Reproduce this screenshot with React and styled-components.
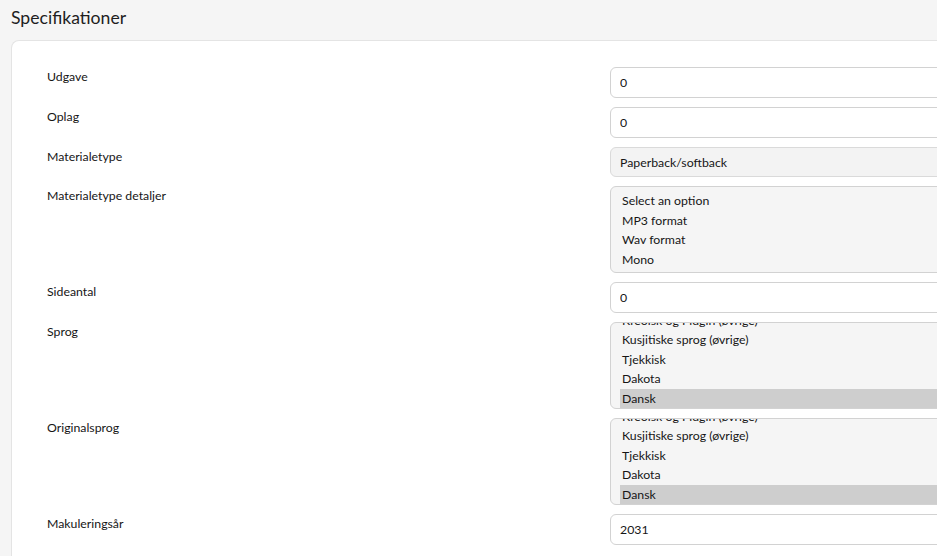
import { useEffect, useRef } from 'react';
import styled, { createGlobalStyle } from 'styled-components';

const GlobalStyle = createGlobalStyle`
    body {
        margin: 0;
        background: #f5f5f5;
        font-family: Lato, "Open Sans", sans-serif;
        color: #1c1c1c;
        overflow: hidden;
    }
`;

const sprog = [
    'Cornisk',
    'Korsikansk',
    'Kreolsk og Pidgin, engelsk-baseret',
    'Kreolsk og Pidgin, fransk-baseret',
    'Cree',
    'Kreolsk og Pidgin (øvrige)',
    'Kusjitiske sprog (øvrige)',
    'Tjekkisk',
    'Dakota',
    'Dansk',
];

const detaljer = ['Select an option', 'MP3 format', 'Wav format', 'Mono'];

function ListField({ options, selected, scrolled }) {
    const ref = useRef(null);

    useEffect(() => {
        if (scrolled && ref.current) {
            ref.current.scrollTop = ref.current.scrollHeight;
        }
    }, [scrolled]);

    return (
        <ListBox ref={ref} $scrolled={scrolled}>
            {options.map((o) => (
                <Option key={o} $selected={o === selected}>{o}</Option>
            ))}
        </ListBox>
    );
}

function App() {
    return (
        <Page>
            <GlobalStyle />
            <Title>Specifikationer</Title>
            <Card>
                <Row>
                    <Label>Udgave</Label>
                    <TextInput readOnly value="0" />
                </Row>
                <Row>
                    <Label>Oplag</Label>
                    <TextInput readOnly value="0" />
                </Row>
                <Row>
                    <Label>Materialetype</Label>
                    <TextInput disabled value="Paperback/softback" />
                </Row>
                <Row>
                    <Label>Materialetype detaljer</Label>
                    <ListField options={detaljer} />
                </Row>
                <Row>
                    <Label>Sideantal</Label>
                    <TextInput readOnly value="0" />
                </Row>
                <Row>
                    <Label>Sprog</Label>
                    <ListField options={sprog} selected="Dansk" scrolled />
                </Row>
                <Row>
                    <Label>Originalsprog</Label>
                    <ListField options={sprog} selected="Dansk" scrolled />
                </Row>
                <Row>
                    <Label>Makuleringsår</Label>
                    <TextInput readOnly value="2031" />
                </Row>
            </Card>
        </Page>
    );
}

const Page = styled.div`
    width: 1100px;
    padding-left: 11px;
`;

const Title = styled.h2`
    margin: 0;
    height: 40px;
    padding-top: 6px;
    box-sizing: border-box;
    font-size: 17.6px;
    font-weight: 400;
    line-height: 24px;
    color: #1e1e1e;
`;

const Card = styled.div`
    background: #ffffff;
    border: 1px solid #e4e4e4;
    border-right: none;
    border-radius: 8px 0 0 0;
    padding: 26px 0 20px 35px;
    display: flex;
    flex-direction: column;
    gap: 9px;
`;

const Row = styled.div`
    display: grid;
    grid-template-columns: 563px 440px;
    align-items: start;
`;

const Label = styled.div`
    font-size: 12.3px;
    line-height: 18px;
    padding-top: 1px;
    color: #161616;
`;

const TextInput = styled.input`
    box-sizing: border-box;
    width: 100%;
    height: ${(p) => (p.disabled ? '30px' : '31px')};
    margin: 0;
    padding: 0 9px;
    border: 1px solid ${(p) => (p.disabled ? '#dadada' : '#d2d2d2')};
    border-radius: 6px;
    background: ${(p) => (p.disabled ? '#f3f3f3' : '#ffffff')};
    font-family: inherit;
    font-size: 12.3px;
    color: #161616;
    outline: none;
    -webkit-text-fill-color: #161616;
    opacity: 1;
`;

const ListBox = styled.div`
    box-sizing: border-box;
    height: 87px;
    padding: ${(p) => (p.$scrolled ? '0 9px' : '4px 9px')};
    border: 1px solid #d2d2d2;
    border-radius: 6px;
    background: #f5f5f5;
    overflow: hidden;
`;

const Option = styled.div`
    height: 19.5px;
    line-height: 19.5px;
    padding-left: 2px;
    font-size: 12.3px;
    white-space: nowrap;
    color: #161616;
    background: ${(p) => (p.$selected ? '#cecece' : 'transparent')};
`;

export default App;
